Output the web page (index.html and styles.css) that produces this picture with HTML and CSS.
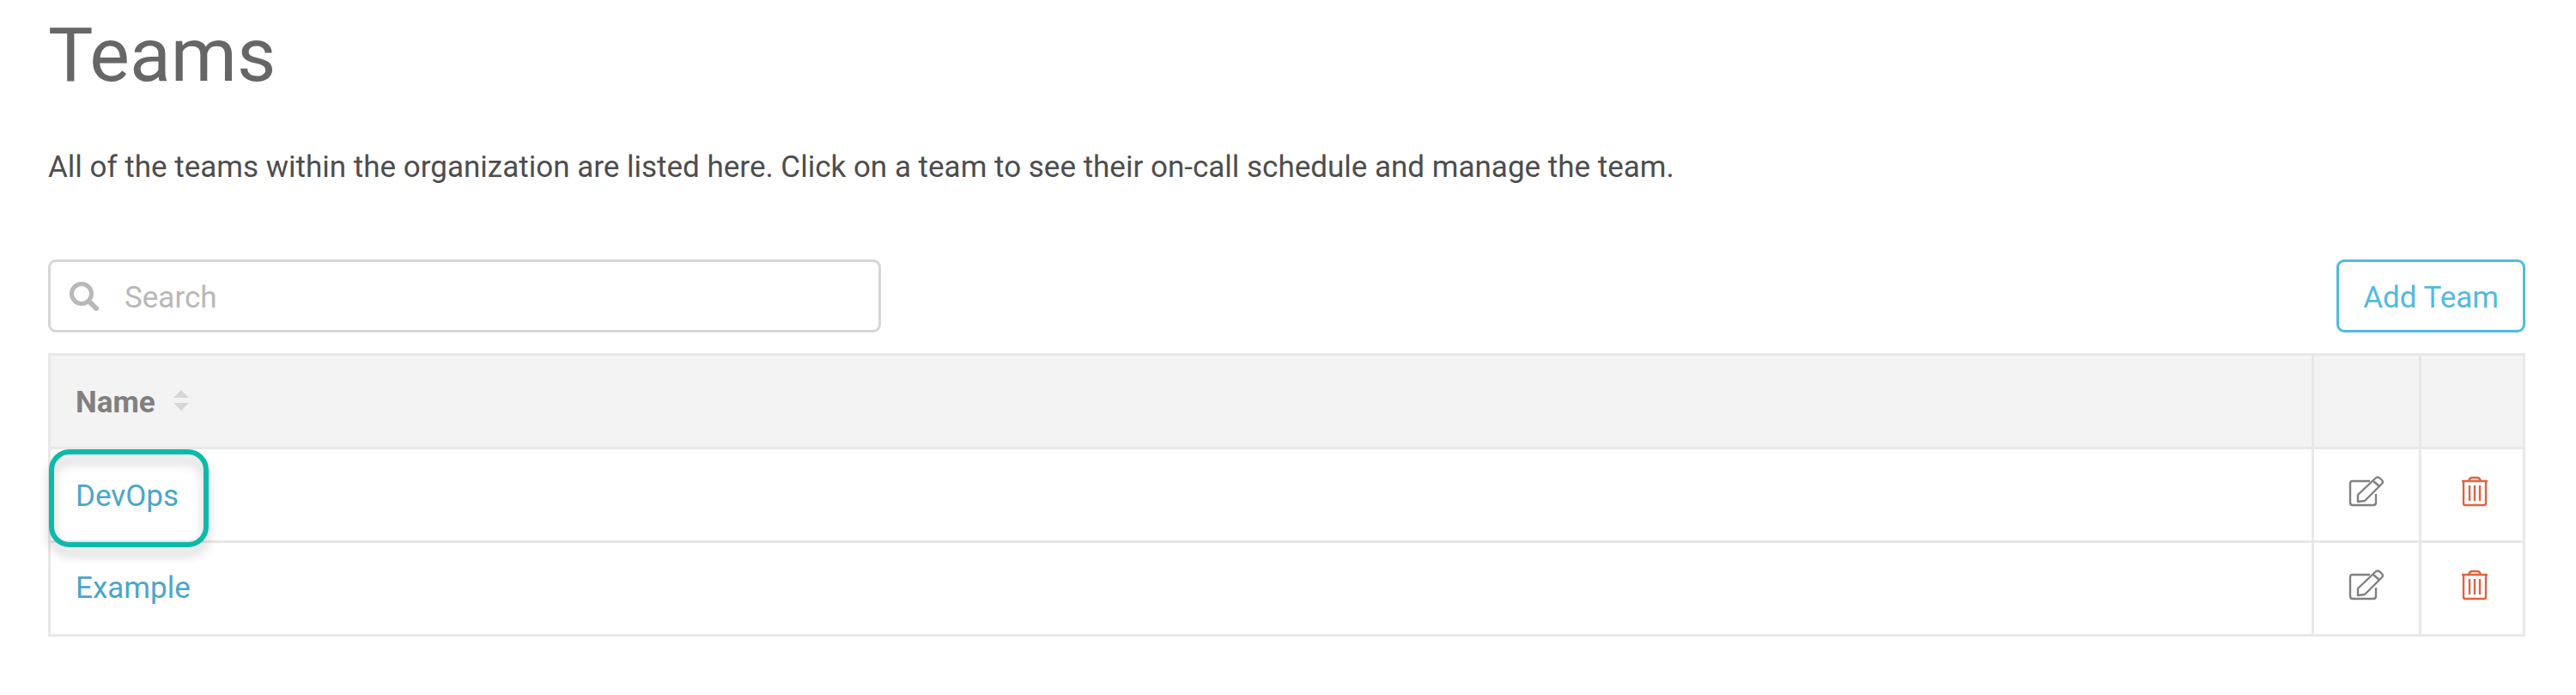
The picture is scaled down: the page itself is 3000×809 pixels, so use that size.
FILE: index.html
```html
<!DOCTYPE html>
<html lang="en">
<head>
<meta charset="utf-8">
<title>Teams</title>
<link rel="stylesheet" href="styles.css">
</head>
<body>
<svg class="sprite" aria-hidden="true">
  <symbol id="icon-edit" viewBox="0 0 42 38">
    <g fill="none" stroke="currentColor" stroke-width="2.4" stroke-linejoin="round">
      <path d="M25 6H5Q2 6 2 9V31Q2 34 5 34H29Q32 34 32 31V21"/>
      <path d="M11 30V22L31 3Q34 0 37 3L39 5Q41 7 39 9L19 29Z"/>
      <path d="M29 6L36 12"/>
    </g>
  </symbol>
  <symbol id="icon-trash" viewBox="0 0 32 38">
    <g fill="none" stroke="currentColor" stroke-width="2.4" stroke-linejoin="round">
      <path d="M1 6H31M9 6Q10 2 13 2H19Q22 2 23 6"/>
      <path d="M3 6V32Q3 34 5 34H27Q29 34 29 32V6"/>
      <path d="M10 11V29M16 11V29M22 11V29"/>
    </g>
  </symbol>
</svg>
<main class="page">
  <h1 class="title">Teams</h1>
  <p class="intro">All of the teams within the organization are listed here. Click on a team to see their on-call schedule and manage the team.</p>
  <div class="toolbar">
    <label class="search">
      <svg class="search-icon" viewBox="0 0 34 34" role="img" aria-label="Search teams">
        <circle cx="14" cy="14" r="11.5" fill="none" stroke="currentColor" stroke-width="5"/>
        <path d="M23 23L31 31" fill="none" stroke="currentColor" stroke-width="6" stroke-linecap="round"/>
      </svg>
      <input class="search-input" type="text" placeholder="Search">
    </label>
    <button class="add-button" type="button">Add Team</button>
  </div>
  <table class="teams">
    <thead>
      <tr>
        <th class="name-cell" scope="col"><span class="sortable">Name
          <svg class="sort-icon" viewBox="0 0 18 26" aria-hidden="true"><path d="M0 10L9 1L18 10ZM0 16L9 25L18 16Z" fill="currentColor"/></svg></span></th>
        <th class="edit-cell"></th>
        <th class="delete-cell"></th>
      </tr>
    </thead>
    <tbody>
      <tr>
        <td class="name-cell highlighted"><a class="team-link" href="#devops">DevOps</a></td>
        <td class="edit-cell"><button class="icon-button" type="button" aria-label="Edit DevOps"><svg class="edit-icon"><use href="#icon-edit"/></svg></button></td>
        <td class="delete-cell"><button class="icon-button danger" type="button" aria-label="Delete DevOps"><svg class="trash-icon"><use href="#icon-trash"/></svg></button></td>
      </tr>
      <tr>
        <td class="name-cell"><a class="team-link" href="#example">Example</a></td>
        <td class="edit-cell"><button class="icon-button" type="button" aria-label="Edit Example"><svg class="edit-icon"><use href="#icon-edit"/></svg></button></td>
        <td class="delete-cell"><button class="icon-button danger" type="button" aria-label="Delete Example"><svg class="trash-icon"><use href="#icon-trash"/></svg></button></td>
      </tr>
    </tbody>
  </table>
</main>
</body>
</html>
```
FILE: styles.css
```css
*, *::after { box-sizing: border-box; }
body {
  margin: 0;
  background: #fff;
  color: #4d4d4d;
  font: 35px/48px Roboto, "Liberation Sans", sans-serif;
}
.sprite { position: absolute; width: 0; height: 0; }
.page { padding: 14px 59px 0 56px; }
.title {
  margin: 0;
  color: #666;
  font-size: 88px;
  font-weight: 400;
  line-height: 100px;
}
.intro { margin: 57px 0 83px; }
.toolbar {
  display: flex;
  align-items: center;
  justify-content: space-between;
  margin-bottom: 24px;
}
.search {
  display: flex;
  align-items: center;
  gap: 30px;
  width: 970px;
  height: 85px;
  padding: 0 22px;
  border: 3px solid #d6d6d6;
  border-radius: 9px;
  color: #b8b8b8;
}
.search-icon { width: 34px; height: 34px; flex: none; }
.search-input {
  flex: 1;
  min-width: 0;
  padding: 4px 0 0;
  border: 0;
  outline: 0;
  background: none;
  color: #4d4d4d;
  font: inherit;
}
.search-input::placeholder { color: #b8b8b8; opacity: 1; }
.add-button {
  height: 85px;
  padding: 4px 28px 0;
  border: 3px solid #53bae0;
  border-radius: 9px;
  background: #fff;
  color: #53bae0;
  font: inherit;
}
.teams { width: 100%; border-collapse: collapse; }
.teams th, .teams td {
  height: 109px;
  padding: 0;
  border: 3px solid #e8e8e8;
  text-align: center;
  vertical-align: middle;
}
.teams th { background: #f3f3f3; color: #808080; font-weight: 700; }
.teams .name-cell { padding-left: 29px; text-align: left; }
.teams th.name-cell, .teams .highlighted { padding-top: 4px; }
.teams .edit-cell { width: 125px; }
.teams .delete-cell { width: 121px; padding-left: 6px; }
.sortable { display: flex; align-items: center; gap: 21px; }
.sort-icon { width: 18px; height: 26px; margin-bottom: 6px; color: #d6d6d6; }
.team-link { color: #4ba6c9; text-decoration: none; }
.highlighted { position: relative; }
.highlighted::after {
  content: "";
  position: absolute;
  top: 0;
  left: -2px;
  width: 186px;
  height: 114px;
  border: 6px solid #0dbaaa;
  border-radius: 24px;
  filter: drop-shadow(0 10px 6px rgba(0, 0, 0, 0.2));
  pointer-events: none;
}
.icon-button {
  display: block;
  margin: 0 auto 6px;
  padding: 0;
  border: 0;
  background: none;
  color: #808080;
}
.danger { color: #e0633f; }
.edit-icon { display: block; width: 42px; height: 38px; }
.trash-icon { display: block; width: 32px; height: 38px; }
```
